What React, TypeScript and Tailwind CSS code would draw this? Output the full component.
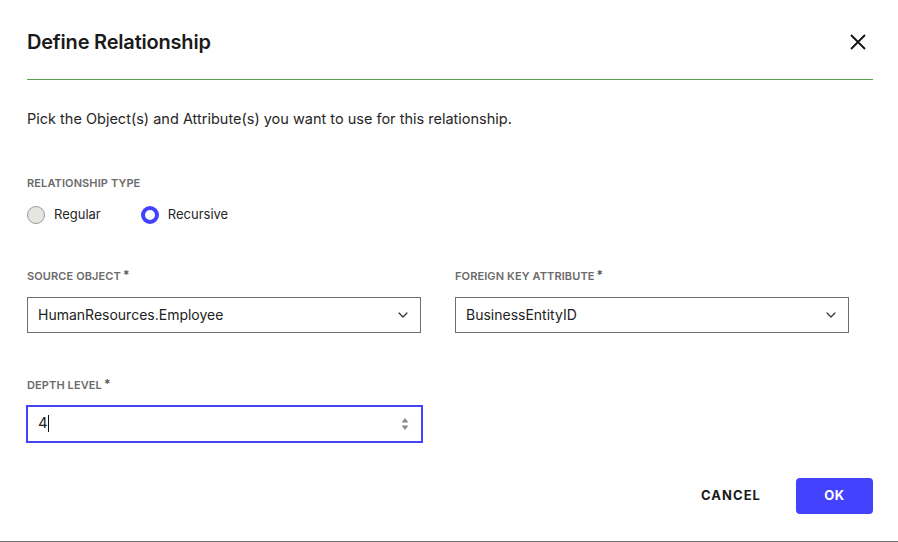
import React from "react";

const blue = "#4242ff";

function Label({ text, required = false }: { text: string; required?: boolean }) {
  return (
    <div className="flex items-start text-[11px] font-semibold uppercase tracking-[0.01em] text-[#6b6b6b] leading-none">
      <span>{text}</span>
      {required && <span className="ml-[2px] -mt-[2px] text-[12px] text-[#555]">*</span>}
    </div>
  );
}

function Chevron() {
  return (
    <svg width="10" height="6" viewBox="0 0 10 6" fill="none">
      <path d="M1 1l4 4 4-4" stroke="#333" strokeWidth="1.2" strokeLinecap="round" strokeLinejoin="round" />
    </svg>
  );
}

function Select({ value }: { value: string }) {
  return (
    <div className="h-[36px] border border-[#6f6f6f] flex items-center justify-between pl-[10px] pr-[12px] text-[14px] text-[#222]">
      <span>{value}</span>
      <Chevron />
    </div>
  );
}

export default function App() {
  return (
    <div className="w-[898px] h-[542px] bg-white flex flex-col font-['Inter',sans-serif] text-[#1c1c1c] border-b border-[#707070]">
      <div className="px-[27px] pr-[25px]">
        {/* Header */}
        <div className="flex items-center justify-between h-[80px] pt-[4px] border-b border-[#55a24a]">
          <h1 className="text-[20px] font-semibold tracking-[-0.01em] text-[#1a1a1a]">Define Relationship</h1>
          <button className="mr-[6px] text-black">
            <svg width="18" height="18" viewBox="0 0 18 18" fill="none">
              <path d="M2 2l14 14M16 2L2 16" stroke="#111" strokeWidth="1.8" />
            </svg>
          </button>
        </div>

        <p className="mt-[29px] text-[14.5px] text-[#262626] leading-[20px]">
          Pick the Object(s) and Attribute(s) you want to use for this relationship.
        </p>

        {/* Relationship type */}
        <div className="mt-[49px]">
          <Label text="Relationship type" />
          <div className="mt-[16px] flex items-center gap-[40px] text-[13px] text-[#262626]">
            <label className="flex items-center gap-[9px]">
              <span className="w-[18px] h-[18px] rounded-full border border-[#9a9a96] bg-[#e6e6e1]" />
              <span>Regular</span>
            </label>
            <label className="flex items-center gap-[9px]">
              <span className="w-[18px] h-[18px] rounded-full border-[4px] border-[#4242ff] bg-white" />
              <span>Recursive</span>
            </label>
          </div>
        </div>

        {/* Source / foreign key */}
        <div className="mt-[46px] grid grid-cols-2 gap-x-[34px] w-[822px]">
          <div className="flex flex-col gap-[15px]">
            <Label text="Source Object" required />
            <Select value="HumanResources.Employee" />
          </div>
          <div className="flex flex-col gap-[15px]">
            <Label text="Foreign Key Attribute" required />
            <Select value="BusinessEntityID" />
          </div>
        </div>

        {/* Depth level */}
        <div className="mt-[47px] w-[397px] -ml-[1px] flex flex-col gap-[14px]">
          <div className="pl-[1px]">
            <Label text="Depth level" required />
          </div>
          <div className="h-[38px] border-2 border-[#4242ff] flex items-center justify-between pl-[10px] pr-[12px] text-[15px] text-[#222]">
            <span className="flex items-center">
              4<span className="w-[1px] h-[17px] bg-[#111]" />
            </span>
            <svg width="8" height="14" viewBox="0 0 8 14">
              <path d="M4 1l3.5 4.5h-7z" fill="#8a8a8a" />
              <path d="M4 13L0.5 8.5h7z" fill="#8a8a8a" />
            </svg>
          </div>
        </div>

        {/* Footer */}
        <div className="mt-[35px] flex justify-end items-center gap-[35px]">
          <button className="text-[13px] font-bold tracking-[0.08em] text-[#1a1a1a]">CANCEL</button>
          <button
            className="w-[77px] h-[36px] rounded-[4px] text-white text-[13px] font-bold tracking-[0.04em]"
            style={{ backgroundColor: blue }}
          >
            OK
          </button>
        </div>
      </div>
    </div>
  );
}
